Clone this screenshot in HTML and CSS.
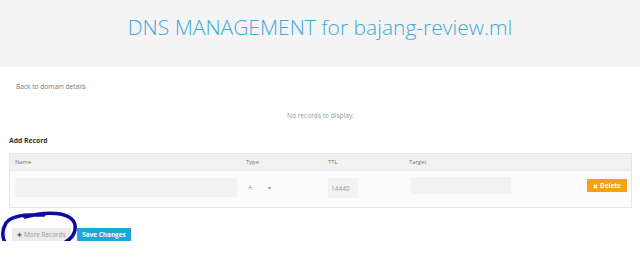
FILE: index.html
```html
<!DOCTYPE html>
<html lang="en">
<head>
    <meta charset="UTF-8">
    <meta name="viewport" content="width=device-width, initial-scale=1.0">
    <title>DNS Management</title>
    <link rel="stylesheet" href="styles.css">
</head>
<body>
    <div class="page-header">
        <h1>DNS MANAGEMENT for bajang-review.ml</h1>
    </div>

    <div class="content">
        <a class="back" href="#">Back to domain details</a>
        <p class="empty">No records to display.</p>

        <h2>Add Record</h2>
        <div class="records">
            <div class="row head">
                <div class="cell">Name</div>
                <div class="cell">Type</div>
                <div class="cell">TTL</div>
                <div class="cell">Target</div>
                <div class="cell"></div>
            </div>
            <div class="row body">
                <div class="cell"><input type="text" class="name-input"></div>
                <div class="cell"><span class="select">A <span class="caret">&#9662;</span></span></div>
                <div class="cell"><input type="text" class="ttl-input" value="14440"></div>
                <div class="cell"><input type="text" class="target-input"></div>
                <div class="cell actions">
                    <button class="btn-delete">
                        <svg class="icon-x" width="5" height="5" viewBox="0 0 5 5">
                            <path d="M0.8 0.8 L4.2 4.2 M4.2 0.8 L0.8 4.2" stroke="white" stroke-width="1.3"/>
                        </svg> Delete
                    </button>
                </div>
            </div>
        </div>

        <div class="buttons">
            <button class="btn-more"><span class="plus">&#10010;</span> More Records</button>
            <button class="btn-save">Save Changes</button>
        </div>
    </div>

    <!-- hand-drawn highlight -->
    <svg class="scribble" width="90" height="60" viewBox="0 0 90 60">
        <path d="M 25 9 C 45 3, 72 3, 75 17 C 78 36, 45 45, 18 42 C 2 40, 0 25, 6 15 C 11 8, 26 6, 44 7"
              fill="none" stroke="#0b0ba6" stroke-width="3.5" stroke-linecap="round"/>
    </svg>
</body>
</html>
```

FILE: styles.css
```css
* {
    margin: 0;
    padding: 0;
    box-sizing: border-box;
    font-family: "Open Sans", sans-serif;
}
body {
    background-color: white;
    position: relative;
}
.page-header {
    height: 67px;
    background-color: #f4f4f4;
    padding-top: 13px;
}
h1 {
    font-weight: 300;
    font-size: 21px;
    line-height: 28px;
    color: #3fa9d9;
    text-align: center;
}
.content {
    padding: 0 8px 0 9px;
}
.back {
    display: block;
    margin-top: 15px;
    padding-left: 7px;
    font-size: 6.6px;
    line-height: 10px;
    color: #777;
    text-decoration: none;
}
.empty {
    margin-top: 19px;
    font-size: 6.6px;
    line-height: 10px;
    color: #999;
    text-align: center;
}
h2 {
    margin-top: 15px;
    font-size: 6.8px;
    line-height: 10px;
    font-weight: bold;
    color: #333;
}
.records {
    margin-top: 7px;
    border: 1px solid #e6e6e6;
}
.row {
    display: grid;
    grid-template-columns: 231px 82px 81px 1fr 60px;
}
.row.head {
    height: 17px;
    background-color: #f1f1f1;
    border-bottom: 1px solid #e6e6e6;
}
.row.head .cell {
    padding-left: 5px;
    font-size: 5.8px;
    line-height: 16px;
    color: #777;
}
.row.body {
    height: 36px;
    background-color: #fbfbfb;
}
.row.body .cell {
    padding-left: 5px;
}
input {
    border: none;
    background-color: #f2f2f2;
    font-size: 6.5px;
    color: #999;
    padding-left: 3px;
}
.name-input {
    width: 222px;
    height: 19px;
    margin-top: 7px;
}
.ttl-input {
    width: 30px;
    height: 20px;
    margin-top: 7px;
}
.target-input {
    width: 100px;
    height: 17px;
    margin-top: 5px;
    margin-left: 2px;
}
.select {
    display: block;
    margin-top: 12px;
    padding-left: 2px;
    font-size: 7px;
    font-weight: 300;
    line-height: 10px;
    color: #555;
}
.caret {
    margin-left: 14px;
    font-size: 6px;
    color: #999;
}
.actions {
    text-align: right;
    padding-right: 4px;
}
button {
    border: none;
    cursor: pointer;
    font-size: 6.4px;
    line-height: 13px;
    height: 13px;
}
.btn-delete {
    margin-top: 4px;
    width: 40px;
    background-color: #f5a018;
    color: white;
    font-weight: bold;
}
.icon-x {
    vertical-align: -0.5px;
}
.buttons {
    margin-top: 20px;
    padding-left: 3px;
    display: flex;
    gap: 6px;
}
.btn-more {
    width: 59px;
    background-color: #ebebeb;
    color: #999;
}
.plus {
    color: #666;
}
.btn-save {
    width: 54px;
    background-color: #1ca6dc;
    color: white;
    font-weight: bold;
}
.scribble {
    position: absolute;
    left: 0;
    top: 208px;
}
```
